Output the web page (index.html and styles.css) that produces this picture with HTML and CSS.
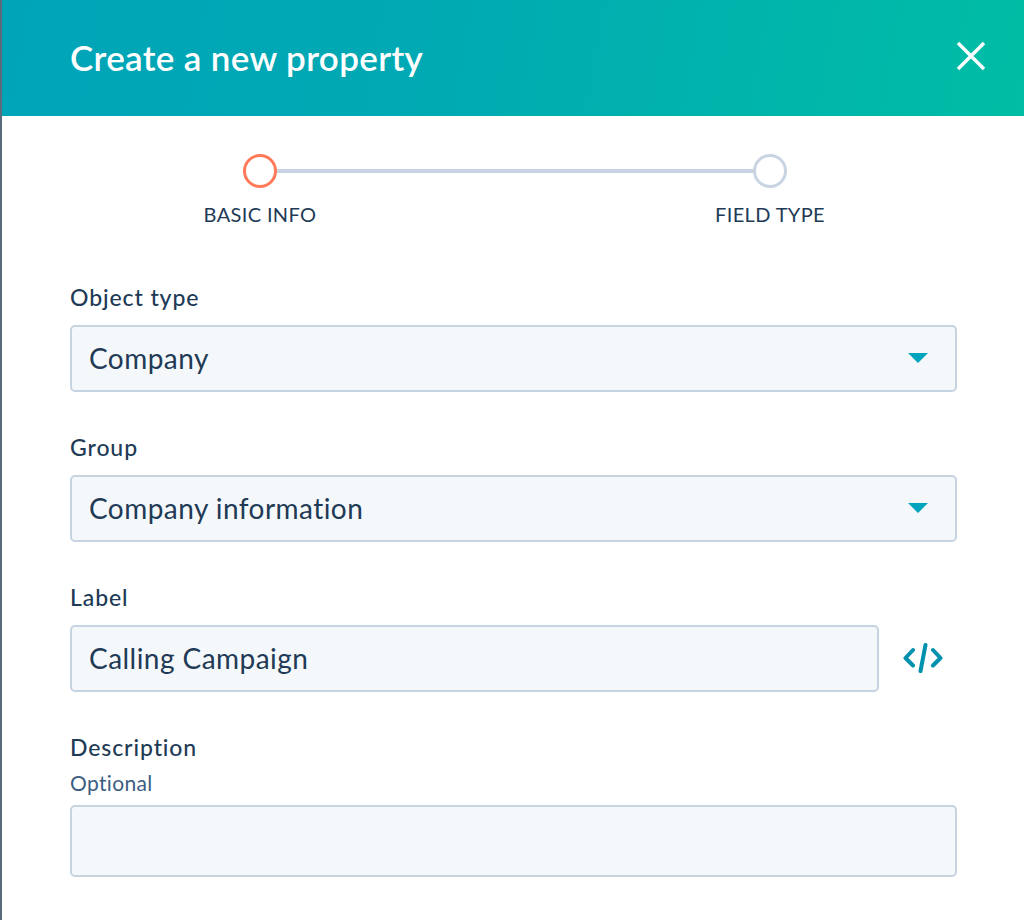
FILE: index.html
```html
<!DOCTYPE html>
<html lang="en">
<head>
<meta charset="utf-8">
<title>Create a new property</title>
<link rel="stylesheet" href="styles.css">
</head>
<body>
<div class="panel">
  <header class="header">
    <h1 class="title">Create a new property</h1>
    <svg class="close" width="30" height="30" viewBox="0 0 30 30" aria-label="Close"><path d="M2 2 L28 28 M28 2 L2 28" stroke="#fff" stroke-width="3.400" fill="none"/></svg>
  </header>
  <main class="content">
    <div class="stepper">
      <div class="track">
        <span class="dot dot-active"></span>
        <span class="line"></span>
        <span class="dot"></span>
      </div>
      <div class="step-labels">
        <span class="step-label">BASIC INFO</span>
        <span class="step-label">FIELD TYPE</span>
      </div>
    </div>
    <div class="field">
      <div class="label">Object type</div>
      <div class="input">Company<span class="caret"></span></div>
    </div>
    <div class="field">
      <div class="label">Group</div>
      <div class="input">Company information<span class="caret"></span></div>
    </div>
    <div class="field">
      <div class="label">Label</div>
      <div class="input-row">
        <div class="input input-short">Calling Campaign</div>
        <svg class="code" width="40" height="30" viewBox="0 0 40 30" aria-label="Code"><path d="M10 7 L2.500 15 L10 22.500 M30 7 L37.500 15 L30 22.500 M22.500 2 L17.500 28" stroke="#0091ae" stroke-width="4" stroke-linecap="round" stroke-linejoin="round" fill="none"/></svg>
      </div>
    </div>
    <div class="field">
      <div class="label">Description</div>
      <div class="hint">Optional</div>
      <div class="input input-text"></div>
    </div>
  </main>
</div>
</body>
</html>
```
FILE: styles.css
```css
* { box-sizing: border-box; }
html, body { margin: 0; height: 920px; overflow: hidden; background: #fff; }
body { font-family: Lato, "Open Sans", sans-serif; color: #213a56; }
.panel { height: 920px; border-left: 2px solid #5b6b7e; }
.header {
  height: 116px;
  padding: 0 38px 0 68px;
  display: flex;
  align-items: center;
  justify-content: space-between;
  background: linear-gradient(100deg, #00a4b8 0%, #00a9b3 40%, #00bda5 100%);
}
.title { margin: 0 0 2px; font-size: 35px; line-height: 40px; font-weight: 600; letter-spacing: 0.35px; color: #fff; }
.close { margin-bottom: 4px; }
.content { padding: 38px 67px 0 68px; }
.stepper { margin-bottom: 55px; padding: 0 127px 0 130px; height: 75px; }
.track { display: flex; align-items: center; padding: 0 43px; }
.dot { width: 34px; height: 34px; border-radius: 50%; border: 3px solid #c8d4e1; background: #fff; flex: none; }
.dot-active { border-color: #ff7a59; }
.line { flex: 1; height: 4px; background: #c8d4e1; }
.step-labels { display: flex; justify-content: space-between; margin-top: 14px; }
.step-label { width: 120px; text-align: center; font-size: 20px; line-height: 24px; letter-spacing: 0.35px; color: #213a56; white-space: nowrap; }
.field { height: 150px; }
.label { font-size: 23px; line-height: 26px; font-weight: 500; letter-spacing: 0.9px; color: #213a56; margin-bottom: 14.6px; }
.hint { font-size: 21px; line-height: 24px; letter-spacing: 0.35px; color: #3b5d82; margin: -4px 0 10.4px; }
.input {
  position: relative;
  height: 67.5px;
  padding: 0 17px;
  display: flex;
  align-items: center;
  font-size: 28px;
  letter-spacing: 0.45px;
  color: #213a56;
  background: #f5f8fa;
  border: 2px solid #c6d3e1;
  border-radius: 5px;
}
.input-row { display: flex; align-items: center; }
.input-short { width: 809px; flex: none; }
.code { margin-left: 24px; }
.input-text { height: 72px; }
.caret {
  position: absolute;
  right: 27px;
  top: 26.400px;
  width: 0;
  height: 0;
  border-left: 10px solid transparent;
  border-right: 10px solid transparent;
  border-top: 10px solid #00a4bd;
}
```
